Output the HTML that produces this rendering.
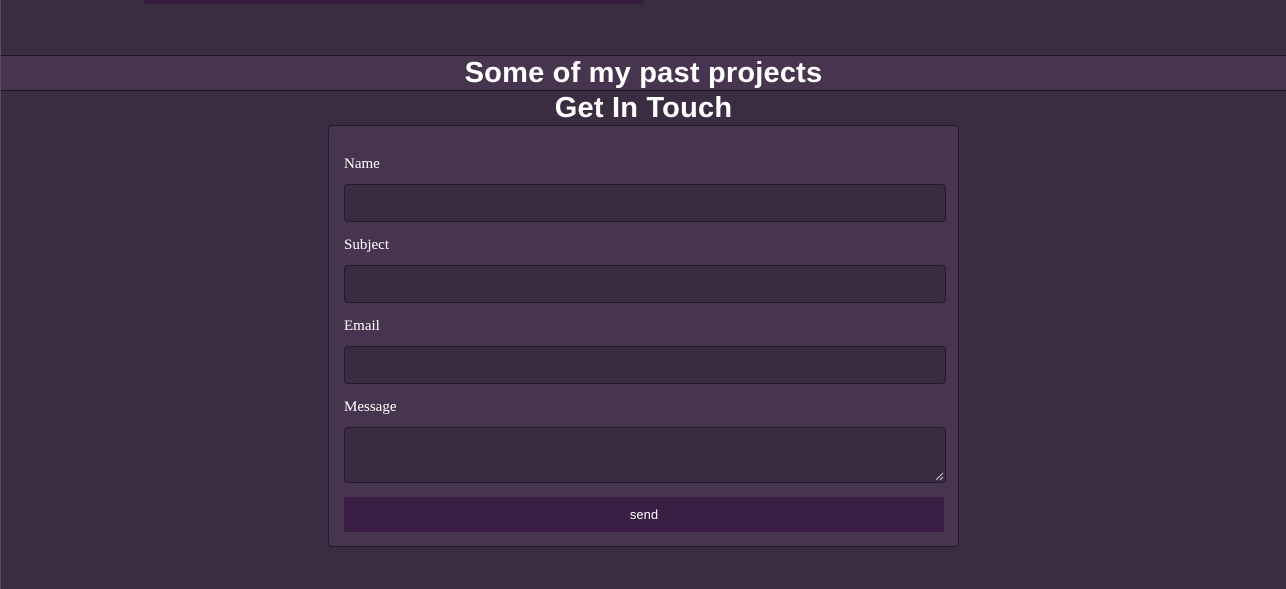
<!DOCTYPE html>
<html><head><meta charset="utf-8"><style>
html,body{margin:0;padding:0;}
body{width:1286px;height:589px;background:#3a2c41;position:relative;overflow:hidden;border-left:1px solid #5a4a62;box-sizing:border-box;}
.bar{position:absolute;left:143px;top:0;width:500px;height:4px;background:#331f3c;}
.band{position:absolute;left:0;right:0;top:55px;height:34px;background:#47344f;border-top:1px solid #1f1525;border-bottom:1px solid #1f1525;}
h2{margin:0;position:absolute;left:0;right:0;text-align:center;color:#fff;font-family:"Liberation Sans",sans-serif;font-weight:bold;font-size:29px;letter-spacing:0.2px;}
.card{position:absolute;left:327px;top:125px;width:631px;height:422px;background:#47344f;border:1px solid #231a29;border-radius:4px;box-sizing:border-box;}
label{position:absolute;left:15px;color:#fff;font-family:"Liberation Serif",serif;font-size:15px;}
.in{position:absolute;left:15px;width:602px;height:38px;background:#392c40;border:1px solid #231a29;border-radius:4px;box-sizing:border-box;}
.btn{position:absolute;left:15px;top:371px;width:600px;height:35px;background:#3a1e44;color:#fff;font-family:"Liberation Sans",sans-serif;font-size:13px;text-align:center;line-height:35px;}
</style></head><body>
<div class="bar"></div>
<div class="band"></div>
<h2 style="top:56px;line-height:34px">Some of my past projects</h2>
<h2 style="top:91px;line-height:34px">Get In Touch</h2>
<div class="card">
<label style="top:30px">Name</label>
<div class="in" style="top:58px"></div>
<label style="top:111px">Subject</label>
<div class="in" style="top:139px"></div>
<label style="top:192px">Email</label>
<div class="in" style="top:220px"></div>
<label style="top:273px">Message</label>
<div class="in" style="top:301px;height:56px">
<svg width="10" height="10" style="position:absolute;right:1px;bottom:1px"><path d="M9 2L2 9M9 6L6 9" stroke="#ccc" stroke-width="1"/></svg>
</div>
<div class="btn">send</div>
</div>
</body></html>
